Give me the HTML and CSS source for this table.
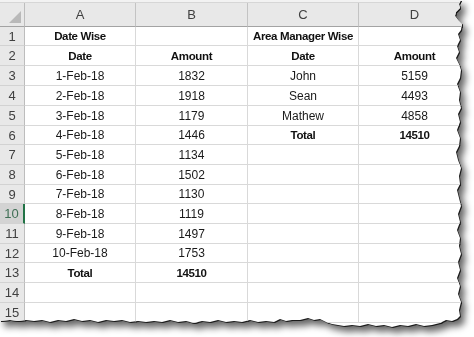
FILE: index.html
```html
<!DOCTYPE html>
<html>
<head>
<meta charset="utf-8">
<link rel="stylesheet" href="styles.css">
</head>
<body>
<div class="paper">
  <div class="sheet">
    <div class="topband"></div>
    <div class="grid">
      <div class="corner"><span class="tri"></span></div>
      <div class="ch">A</div><div class="ch">B</div><div class="ch">C</div><div class="ch">D</div>

      <div class="rh">1</div><div class="c b">Date Wise</div><div class="c"></div><div class="c b">Area Manager Wise</div><div class="c"></div>
      <div class="rh">2</div><div class="c b">Date</div><div class="c b">Amount</div><div class="c b">Date</div><div class="c b">Amount</div>
      <div class="rh">3</div><div class="c">1-Feb-18</div><div class="c">1832</div><div class="c">John</div><div class="c">5159</div>
      <div class="rh">4</div><div class="c">2-Feb-18</div><div class="c">1918</div><div class="c">Sean</div><div class="c">4493</div>
      <div class="rh">5</div><div class="c">3-Feb-18</div><div class="c">1179</div><div class="c">Mathew</div><div class="c">4858</div>
      <div class="rh">6</div><div class="c">4-Feb-18</div><div class="c">1446</div><div class="c b">Total</div><div class="c b">14510</div>
      <div class="rh">7</div><div class="c">5-Feb-18</div><div class="c">1134</div><div class="c"></div><div class="c"></div>
      <div class="rh">8</div><div class="c">6-Feb-18</div><div class="c">1502</div><div class="c"></div><div class="c"></div>
      <div class="rh">9</div><div class="c">7-Feb-18</div><div class="c">1130</div><div class="c"></div><div class="c"></div>
      <div class="rh sel">10</div><div class="c">8-Feb-18</div><div class="c">1119</div><div class="c"></div><div class="c"></div>
      <div class="rh">11</div><div class="c">9-Feb-18</div><div class="c">1497</div><div class="c"></div><div class="c"></div>
      <div class="rh">12</div><div class="c">10-Feb-18</div><div class="c">1753</div><div class="c"></div><div class="c"></div>
      <div class="rh">13</div><div class="c b">Total</div><div class="c b">14510</div><div class="c"></div><div class="c"></div>
      <div class="rh">14</div><div class="c"></div><div class="c"></div><div class="c"></div><div class="c"></div>
      <div class="rh">15</div><div class="c"></div><div class="c"></div><div class="c"></div><div class="c"></div>
    </div>
  </div>
</div>
</body>
</html>
```
FILE: styles.css
```css
html, body {
  margin: 0;
  padding: 0;
  background: #fff;
}
body {
  width: 474px;
  height: 337px;
  overflow: hidden;
  font-family: "Liberation Sans", Arial, sans-serif;
  color: #1a1a1a;
}
.paper {
  width: 474px;
  height: 337px;
  filter: drop-shadow(1px 1px 0 #1a1a1a) drop-shadow(4px 5px 3.5px rgba(0,0,0,0.6));
}
.sheet {
  width: 474px;
  height: 337px;
  background: #fff;
  clip-path: polygon(0 0, 461px 0, 459px 4px, 460px 8px, 456px 12px, 455px 16px, 458px 20px, 462px 24px, 461px 30px, 458px 34px, 460px 40px, 457px 46px, 459px 52px, 456px 58px, 459px 64px, 461px 70px, 460px 78px, 457px 84px, 460px 92px, 459px 100px, 461px 108px, 458px 114px, 460px 122px, 457px 130px, 460px 138px, 459px 146px, 456px 152px, 458px 160px, 461px 168px, 459px 176px, 460px 184px, 457px 190px, 459px 198px, 461px 206px, 458px 214px, 460px 222px, 457px 230px, 460px 238px, 459px 246px, 461px 254px, 458px 262px, 460px 270px, 457px 278px, 460px 286px, 458px 294px, 461px 302px, 459px 310px, 460px 316px, 457px 319px, 452px 321px, 446px 320px, 440px 323px, 432px 325px, 424px 326px, 416px 324px, 408px 326px, 400px 325px, 392px 327px, 384px 325px, 376px 326px, 368px 324px, 360px 326px, 352px 325px, 344px 326px, 338px 325px, 332px 324px, 326px 322px, 320px 319px, 314px 320px, 308px 318px, 300px 320px, 292px 320px, 286px 321px, 280px 319px, 274px 322px, 266px 321px, 258px 322px, 250px 320px, 242px 322px, 234px 321px, 226px 322px, 218px 320px, 210px 322px, 202px 321px, 194px 323px, 186px 321px, 178px 322px, 170px 320px, 162px 322px, 154px 321px, 146px 322px, 138px 321px, 130px 322px, 122px 320px, 114px 321px, 106px 320px, 98px 322px, 90px 320px, 82px 321px, 74px 319px, 66px 321px, 58px 320px, 50px 322px, 42px 320px, 34px 321px, 26px 320px, 18px 321px, 10px 320px, 0 321px);
}
.topband {
  height: 2px;
  background: #f2f2f2;
  border-bottom: 1px solid #d6d6d6;
}
.grid {
  display: grid;
  grid-template-columns: 25px 111px 112px 111px 112px;
  grid-template-rows: 24px 19px 20px 20px 20px 20px 19px 20px 20px 19px 20px 20px 19px 20px 20px 20px;
}
.corner {
  position: relative;
  background: #e8e8e8;
  border-right: 1px solid #bdbdbd;
  border-bottom: 1px solid #a3a3a3;
}
.tri {
  position: absolute;
  right: 3px;
  bottom: 3px;
  width: 0;
  height: 0;
  border-left: 12px solid transparent;
  border-bottom: 12px solid #b9b9b9;
}
.ch {
  background: #e8e8e8;
  border-right: 1px solid #c3c3c3;
  border-bottom: 1px solid #a3a3a3;
  display: flex;
  align-items: center;
  justify-content: center;
  font-size: 13px;
  color: #404040;
}
.rh {
  background: #e8e8e8;
  border-right: 1px solid #bdbdbd;
  border-bottom: 1px solid #d2d2d2;
  display: flex;
  align-items: center;
  justify-content: center;
  font-size: 13px;
  color: #404040;
}
.rh.sel {
  background: #d3d3d3;
  color: #3f6f55;
  border-right: 2px solid #217346;
}
.c {
  border-right: 1px solid #d9d9d9;
  border-bottom: 1px solid #d9d9d9;
  display: flex;
  align-items: center;
  justify-content: center;
  font-size: 12px;
  white-space: nowrap;
}
.c.b {
  font-weight: bold;
  font-size: 11.5px;
  letter-spacing: -0.35px;
  color: #111;
}
```
